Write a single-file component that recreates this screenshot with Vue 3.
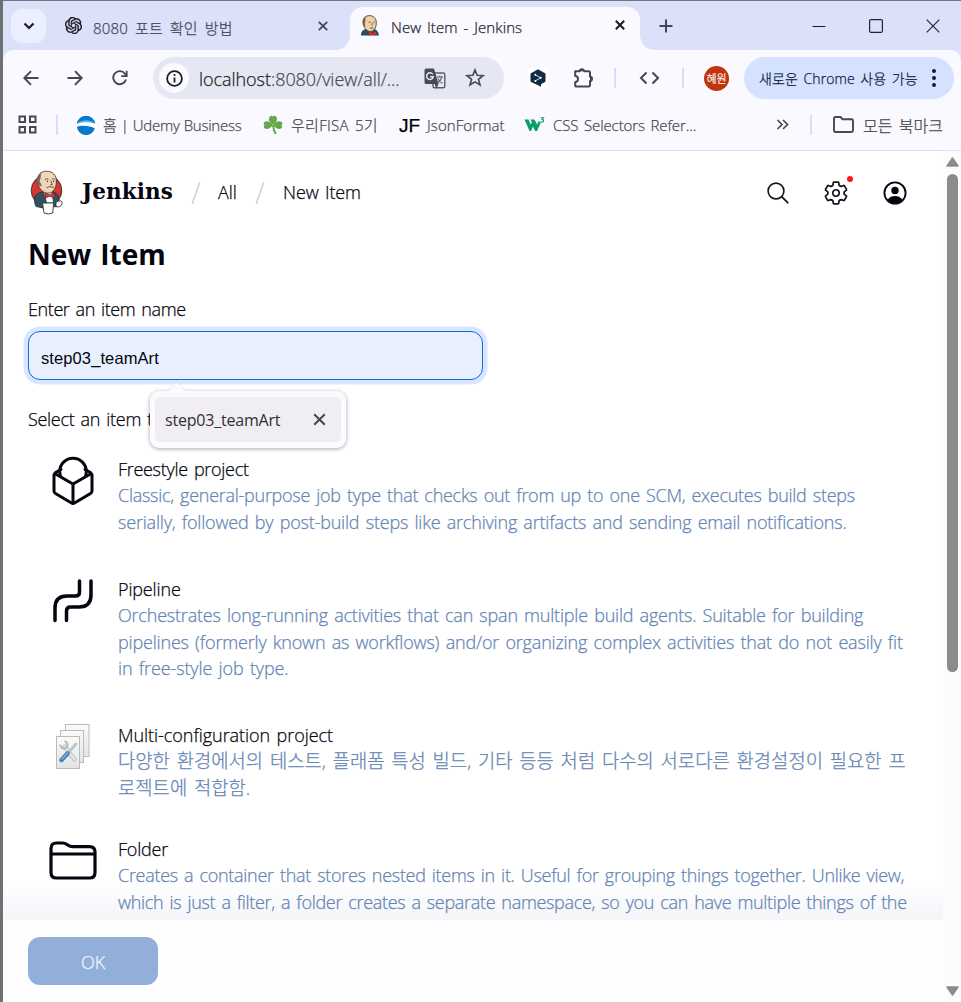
<script setup>
const items = [
  {
    id: 'freestyle',
    title: 'Freestyle project',
    lines: [
      'Classic, general-purpose job type that checks out from up to one SCM, executes build steps',
      'serially, followed by post-build steps like archiving artifacts and sending email notifications.',
    ],
  },
  {
    id: 'pipeline',
    title: 'Pipeline',
    lines: [
      'Orchestrates long-running activities that can span multiple build agents. Suitable for building',
      'pipelines (formerly known as workflows) and/or organizing complex activities that do not easily fit',
      'in free-style job type.',
    ],
  },
  {
    id: 'matrix',
    title: 'Multi-configuration project',
    lines: [
      '다양한 환경에서의 테스트, 플래폼 특성 빌드, 기타 등등 처럼 다수의 서로다른 환경설정이 필요한 프',
      '로젝트에 적합함.',
    ],
  },
  {
    id: 'folder',
    title: 'Folder',
    lines: [
      'Creates a container that stores nested items in it. Useful for grouping things together. Unlike view,',
      'which is just a filter, a folder creates a separate namespace, so you can have multiple things of the',
    ],
  },
]
</script>

<template>
  <div class="window">
    <div class="tabstrip">
      <button class="tabsearch">
        <svg width="12" height="8" viewBox="0 0 12 8"><path d="M1.5 1.5 6 6l4.5-4.500" fill="none" stroke="#1b1c20" stroke-width="2.200" /></svg>
      </button>
      <div class="tab idle">
        <svg width="17" height="17" viewBox="0 0 24 24"><path stroke="#111" stroke-width=".4" fill="#111" d="M22.2819 9.8211a5.9847 5.9847 0 0 0-.5157-4.9108 6.0462 6.0462 0 0 0-6.5098-2.9A6.0651 6.0651 0 0 0 4.9807 4.1818a5.9847 5.9847 0 0 0-3.9977 2.9 6.0462 6.0462 0 0 0 .7427 7.0966 5.98 5.98 0 0 0 .511 4.9107 6.051 6.051 0 0 0 6.5146 2.9001A5.9847 5.9847 0 0 0 13.2599 24a6.0557 6.0557 0 0 0 5.7718-4.2058 5.9894 5.9894 0 0 0 3.9977-2.9001 6.0557 6.0557 0 0 0-.7475-7.0729zm-9.022 12.6081a4.4755 4.4755 0 0 1-2.8764-1.0408l.1419-.0804 4.7783-2.7582a.7948.7948 0 0 0 .3927-.6813v-6.7369l2.02 1.1686a.071.071 0 0 1 .038.052v5.5826a4.504 4.504 0 0 1-4.4945 4.4944zm-9.6607-4.1254a4.4708 4.4708 0 0 1-.5346-3.0137l.142.0852 4.783 2.7582a.7712.7712 0 0 0 .7806 0l5.8428-3.3685v2.3324a.0804.0804 0 0 1-.0332.0615L9.74 19.9502a4.4992 4.4992 0 0 1-6.1408-1.6464zM2.3408 7.8956a4.485 4.485 0 0 1 2.3655-1.9728V11.6a.7664.7664 0 0 0 .3879.6765l5.8144 3.3543-2.0201 1.1685a.0757.0757 0 0 1-.071 0l-4.8303-2.7865A4.504 4.504 0 0 1 2.3408 7.872zm16.5963 3.8558L13.1038 8.364 15.1192 7.2a.0757.0757 0 0 1 .071 0l4.8303 2.7913a4.4944 4.4944 0 0 1-.6765 8.1042v-5.6772a.79.79 0 0 0-.407-.667zm2.0107-3.0231l-.142-.0852-4.7735-2.7818a.7759.7759 0 0 0-.7854 0L9.409 9.2297V6.8974a.0662.0662 0 0 1 .0284-.0615l4.8303-2.7866a4.4992 4.4992 0 0 1 6.6802 4.66zM8.3065 12.863l-2.02-1.1638a.0804.0804 0 0 1-.038-.0567V6.0742a4.4992 4.4992 0 0 1 7.3757-3.4537l-.142.0805L8.704 5.459a.7948.7948 0 0 0-.3927.6813zm1.0976-2.3654l2.602-1.4998 2.6069 1.4998v2.9994l-2.5974 1.4997-2.6067-1.4997Z" /></svg>
        <span class="tabtitle t-idle">8080 포트 확인 방법</span>
        <svg class="close" width="10" height="10" viewBox="0 0 10 10"><path d="M.8.8l8.400 8.400M9.200.8.8 9.200" stroke="#43475a" stroke-width="1.800" /></svg>
      </div>
      <div class="tab active">
        <svg width="20" height="21" viewBox="0 0 20 21">
          <path d="M1 20.500c0-4 2-6 5-6.500l8 0c3 .5 4.500 3 5 6.500z" fill="#2f4a5c" />
          <path d="M3 8C2.500 3 6 .6 9.500.6c4 0 7 2.700 6.800 7.600-.1 4.500-2.300 8.300-6 8.300C6.500 16.500 3.500 12 3 8z" fill="#efd0a7" stroke="#4b4038" stroke-width=".9" />
          <path d="M3 8c-.3-3 1-5.500 2.500-6.200C5 4.500 6 6.500 4.800 8.500l.7 3C4 11 3.200 9.500 3 8z" fill="#6d6259" />
          <path d="M8.500 7.500l2-.5m2.500 0 1.700.3M12 8v2.500M10 13h3.500" stroke="#4b4038" stroke-width=".8" fill="none" />
          <path d="M9 16.800l3.500 1.200 3.500-1.400v3.900l-3.500-1L9 20.500z" fill="#dc2a22" />
        </svg>
        <span class="tabtitle t-active">New Item - Jenkins</span>
        <svg class="close" width="10" height="10" viewBox="0 0 10 10"><path d="M.8.8l8.400 8.400M9.200.8.8 9.200" stroke="#1b1c22" stroke-width="2" /></svg>
      </div>
      <svg class="plus" width="14" height="14" viewBox="0 0 14 14"><path d="M7 .5v13M.5 7h13" stroke="#434755" stroke-width="2" /></svg>
      <div class="wincontrols">
        <svg width="14" height="14" viewBox="0 0 14 14"><path d="M.5 7.500h13" stroke="#1c1c22" /></svg>
        <svg width="14" height="14" viewBox="0 0 14 14"><rect x=".6" y=".6" width="12.800" height="12.800" rx="1.500" fill="none" stroke="#25262d" stroke-width="1.200" /></svg>
        <svg width="14" height="14" viewBox="0 0 14 14"><path d="M.7.7l12.600 12.600M13.300.7.7 13.300" stroke="#25262d" stroke-width="1.200" /></svg>
      </div>
    </div>

    <div class="toolbar">
      <svg class="back" width="16" height="16" viewBox="0 0 16 16"><path d="M15.500 8H1.500M8 1.200 1.300 8 8 14.800" fill="none" stroke="#434755" stroke-width="1.900" /></svg>
      <svg class="forward" width="16" height="16" viewBox="0 0 16 16"><path d="M.5 8h14M8 1.200 14.700 8 8 14.800" fill="none" stroke="#434755" stroke-width="1.900" /></svg>
      <svg class="reload" width="16" height="16" viewBox="0 0 16 16"><path d="M14 9.500A6.500 6.500 0 1 1 13 3.800L14.500 5.600" fill="none" stroke="#434755" stroke-width="1.900" /><path d="M14.700.8v5.400H9.300" fill="none" stroke="#434755" stroke-width="1.800" /></svg>
      <div class="omnibox">
        <span class="siteinfo">
          <svg width="17" height="17" viewBox="0 0 17 17"><circle cx="8.500" cy="8.500" r="7.400" fill="none" stroke="#1c1d22" stroke-width="1.800" /><path d="M8.500 7.500v5" stroke="#1c1d22" stroke-width="1.800" /><circle cx="8.500" cy="5" r="1.100" fill="#1c1d22" /></svg>
        </span>
        <span class="url"><b>localhost</b>:8080/view/all/...</span>
        <svg class="translate" width="22" height="21" viewBox="0 0 22 21">
          <rect x="9" y="5" width="11.800" height="14.800" rx="1.500" fill="none" stroke="#5a5d66" stroke-width="1.400" />
          <path d="M2 .5h8l4.500 15.500H2A1.500 1.500 0 0 1 .5 14.500V2A1.500 1.500 0 0 1 2 .5zM10.500 16h4L12.500 20.500z" fill="#494c53" />
          <path d="M8.700 6.300A3.300 3.300 0 1 0 9.200 8.800H6.200" fill="none" stroke="#e5e8f2" stroke-width="1.500" />
          <path d="M12.500 9h6.500M15.800 7.500V9m2 .2c-.6 2.500-2.300 4.500-4 5.600M13.800 10.500c1 2 2.600 3.600 4.600 4.800" fill="none" stroke="#5a5d66" stroke-width="1.100" />
        </svg>
        <svg class="star" width="20" height="20" viewBox="0 0 20 20"><path d="m10 2 2.100 5.300 5.900.4-4.500 3.700 1.500 5.600-5-3.100L5 17l1.500-5.600L2 7.700l5.900-.4z" fill="none" stroke="#494c53" stroke-width="1.700" /></svg>
      </div>
      <span class="deepl">
        <svg width="16" height="18" viewBox="0 0 16 18"><path d="M8 .3 15 4.200q.5.300.5.900v7q0 .6-.5.900l-4 2.300v2.400L8 16.300 1 13q-.5-.3-.5-.9v-7q0-.6.500-.9z" fill="#0f2b46" /><path d="m5.200 5.800 5.500 3-5.500 3.200" fill="none" stroke="#fff" stroke-width=".8" /><circle cx="5.300" cy="5.800" r="1" fill="#fff" /><circle cx="10.700" cy="8.800" r="1" fill="#fff" /><circle cx="5.300" cy="12" r="1" fill="#fff" /></svg>
      </span>
      <svg class="puzzle" width="22" height="22" viewBox="0 0 22 22"><path d="M2.200 4.300h4.600a2.200 2 0 0 1 4.400 0h4.600q1.200 0 1.200 1.200v4.200a2 2.200 0 0 1 0 4.400v4.200q0 1.300-1.200 1.300H3.400q-1.200 0-1.200-1.200v-3.500q2.800 0 2.800-3t-2.800-3z" fill="none" stroke="#434755" stroke-width="2" stroke-linejoin="round" /><path d="M7 4.300a2.200 2.200 0 0 1 4.200 0zM17 9.800a2 2.200 0 0 1 0 4.300z" fill="#434755" /></svg>
      <i class="sep s1"></i>
      <svg class="code" width="21" height="14" viewBox="0 0 21 14"><path d="M7.500 1.500 2 7l5.500 5.500M13.500 1.500 19 7l-5.500 5.500" fill="none" stroke="#434755" stroke-width="2" /></svg>
      <i class="sep s2"></i>
      <span class="avatar">혜원</span>
      <div class="update"><span class="updatetext">새로운 Chrome 사용 가능</span>
        <svg width="4" height="18" viewBox="0 0 4 18"><g fill="#0b1d45"><circle cx="2" cy="2" r="2" /><circle cx="2" cy="9" r="2" /><circle cx="2" cy="16" r="2" /></g></svg>
      </div>
    </div>

    <div class="bookmarks">
      <svg class="apps" width="19" height="19" viewBox="0 0 19 19"><g fill="none" stroke="#46494f" stroke-width="2"><rect x="1.500" y="1.500" width="5.500" height="5.500" /><rect x="12" y="1.500" width="5.500" height="5.500" /><rect x="1.500" y="12" width="5.500" height="5.500" /><rect x="12" y="12" width="5.500" height="5.500" /></g></svg>
      <i class="sep s3"></i>
      <svg class="udemy" width="20" height="20" viewBox="0 0 20 20"><rect width="20" height="20" fill="#fff" /><path d="M.7 8.800a9.400 9.400 0 0 1 18.600 0C15 5.800 5 5.800.7 8.800z" fill="#0878cf" /><path d="M.7 8.800C4 4 16 4 19.300 8.800 15 6.600 5 6.600.7 8.800z" fill="#48b8ef" /><path d="M.8 12c4-2 13-1.500 18.100 1.500A9.300 9.300 0 0 1 .8 12z" fill="#0878cf" /></svg>
      <span class="bm b-udemy">홈 | Udemy Business</span>
      <svg class="clover" width="20" height="20" viewBox="0 0 20 20"><g fill="#64a84b"><path d="M10 9.500C7 8 5 5 6.500 2 8 .2 9.300.6 10 1.600 10.700.6 12 .2 13.500 2 15 5 13 8 10 9.500z" /><path d="M10 10C8 13 4.500 14.800 2 13.600.3 12.300.8 11 1.600 10.200.5 9.500.2 8 1.600 6.800 4.500 5.400 8 7 10 10z" /><path d="M10 10c2 3 5.500 4.800 8 3.600 1.700-1.300 1.200-2.600.4-3.400 1.100-.7 1.400-2.200 0-3.400C15.500 5.400 12 7 10 10z" /></g><path d="M10 10q.2 5 2.800 9" fill="none" stroke="#64a84b" stroke-width="2" /></svg>
      <span class="bm b-fisa">우리FISA 5기</span>
      <span class="jf">JF</span>
      <span class="bm b-json">JsonFormat</span>
      <svg class="w3" width="21" height="15" viewBox="0 0 21 15"><path d="M.5 2.500h4l2.300 5 1-2.200L6.500 2.500h4l2.600 5L15 3.500l1.500 3L13 14h-2L9 9.500 7 14H5.500z" fill="#0a9f68" /><path d="M16.500.8h3l-1.400 1.700q1.700.2 1.500 1.600-.4 1.500-3.200.8" fill="none" stroke="#0a9f68" stroke-width="1.100" /></svg>
      <span class="bm b-css">CSS Selectors Refer...</span>
      <svg class="more" width="13" height="11" viewBox="0 0 13 11"><path d="m1.500 1 4.500 4.500L1.500 10M7 1l4.500 4.500L7 10" fill="none" stroke="#46494f" stroke-width="1.700" /></svg>
      <i class="sep s4"></i>
      <svg class="bmfolder" width="21" height="17" viewBox="0 0 21 17"><path d="M1 2.500Q1 1 2.500 1h5l2 2.200h9Q20 3.200 20 4.700v9.800q0 1.500-1.500 1.500h-16Q1 16 1 14.500z" fill="none" stroke="#46494f" stroke-width="1.900" /></svg>
      <span class="bm b-all">모든 북마크</span>
    </div>

    <div class="viewport">
      <main class="page">
        <header class="crumbs">
          <svg class="logo" width="33" height="45" viewBox="0 0 33 45">
            <ellipse cx="16.500" cy="20.500" rx="15.300" ry="15.500" fill="#d33833" stroke="#3a2622" stroke-width=".9" />
            <path d="M4.500 27c2-3.500 6-5 10-5.500l8 0c4 1 6.500 4 6.500 8.500l-2 6.500-14 1.500-7-1.500C4.500 33 4 30 4.500 27z" fill="#335061" stroke="#1e2e38" stroke-width=".8" />
            <path d="M14 22l7.500-.5 1.500 11h-6z" fill="#fff" />
            <path d="M7.500 12C6.500 5 11 1.200 16.500 1.200c6 0 10.300 3.800 9.900 11-.3 6-3.400 11-8.400 11C12 23.200 8.300 17 7.500 12z" fill="#f0d6b7" stroke="#49392f" stroke-width=".9" />
            <path d="M7.500 13c-1-5 .7-8.500 4-10.800-1.200 3.300 0 6-2 8.500l2.500 5.500C9.500 16 8 15 7.500 13z" fill="#6d6b6d" />
            <path d="M15 9.500q2-1.300 3.500-.3m3.500-.2q1.500-.8 3 .3M20.800 10.500l1.500 4-2 .3M16.500 17.800q2.500-2.200 7.500-.5" fill="none" stroke="#49392f" stroke-width=".8" />
            <circle cx="17.500" cy="11.300" r=".7" fill="#222" /><circle cx="23.700" cy="11.300" r=".7" fill="#222" />
            <path d="M15.200 23l4.300 1.700 4.800-1.900.2 4.800-5-1.200-4.500 1.800z" fill="#d33833" stroke="#7b1712" stroke-width=".6" />
            <path d="M26 32q6-2.500 6 .5c0 4-3 5-6 4z" fill="#fff" stroke="#333" stroke-width=".9" />
            <path d="M12.500 33h11.200l-1 10q-4.500 2-8.700 0z" fill="#fff" stroke="#333" stroke-width=".9" />
          </svg>
          <span class="brand">Jenkins</span>
          <svg class="slash sl1" width="10" height="22" viewBox="0 0 10 22"><path d="M8.500 1 1.500 21" stroke="#cbd7e8" stroke-width="1.800" stroke-linecap="round" /></svg>
          <span class="crumb c-all">All</span>
          <svg class="slash sl2" width="10" height="22" viewBox="0 0 10 22"><path d="M8.500 1 1.500 21" stroke="#cbd7e8" stroke-width="1.800" stroke-linecap="round" /></svg>
          <span class="crumb c-new">New Item</span>
          <div class="actions">
            <svg width="22" height="22" viewBox="0 0 22 22"><circle cx="9" cy="9" r="7.900" fill="none" stroke="#14141f" stroke-width="1.600" /><path d="m14.700 14.700 6 6" stroke="#14141f" stroke-width="1.800" stroke-linecap="round" /></svg>
            <span class="gear">
              <svg width="26" height="26" viewBox="0 0 512 512"><path fill="none" stroke="#14141f" stroke-width="34" stroke-linejoin="round" d="M262.290 192.310a64 64 0 1 0 57.400 57.400 64.130 64.130 0 0 0-57.400-57.400zM416.390 256a154.340 154.340 0 0 1-1.530 20.790l45.210 35.460a10.810 10.810 0 0 1 2.450 13.750l-42.770 74a10.810 10.810 0 0 1-13.140 4.590l-44.900-18.080a16.110 16.110 0 0 0-15.170 1.750A164.480 164.480 0 0 1 325 400.800a15.940 15.940 0 0 0-8.820 12.140l-6.730 47.890a11.080 11.080 0 0 1-10.680 9.170h-85.540a11.110 11.110 0 0 1-10.690-8.870l-6.720-47.820a16.070 16.070 0 0 0-9-12.220 155.300 155.300 0 0 1-21.460-12.570 16 16 0 0 0-15.110-1.710l-44.890 18.070a10.810 10.810 0 0 1-13.140-4.580l-42.770-74a10.800 10.800 0 0 1 2.450-13.750l38.210-30a16.050 16.050 0 0 0 6-14.080c-.36-4.170-.58-8.330-.58-12.500s.21-8.270.58-12.350a16 16 0 0 0-6.070-13.940l-38.190-30A10.810 10.810 0 0 1 49.480 186l42.770-74a10.810 10.810 0 0 1 13.140-4.590l44.900 18.080a16.110 16.110 0 0 0 15.170-1.750A164.480 164.480 0 0 1 187 111.200a15.940 15.940 0 0 0 8.820-12.140l6.730-47.890A11.080 11.080 0 0 1 213.230 42h85.540a11.110 11.110 0 0 1 10.690 8.870l6.720 47.820a16.070 16.070 0 0 0 9 12.220 155.300 155.300 0 0 1 21.460 12.570 16 16 0 0 0 15.110 1.710l44.890-18.070a10.810 10.810 0 0 1 13.140 4.580l42.770 74a10.800 10.800 0 0 1-2.450 13.750l-38.210 30a16.050 16.050 0 0 0-6.050 14.080c.33 4.140.55 8.300.55 12.470z" /></svg>
              <i class="dot"></i>
            </span>
            <svg width="24" height="24" viewBox="0 0 24 24"><circle cx="12" cy="12" r="10.600" fill="#fff" stroke="#05050f" stroke-width="1.800" /><circle cx="12" cy="9.500" r="3.700" fill="#05050f" /><path d="M4.800 18.500C6.500 16 9 15 12 15s5.500 1 7.200 3.500C17.500 21 15 22.300 12 22.300S6.500 21 4.800 18.500z" fill="#05050f" /></svg>
          </div>
        </header>

        <h1 class="heading"><span>New Item</span></h1>
        <label class="label l-name"><span>Enter an item name</span></label>
        <div class="namefield"><span>step03_teamArt</span>
          <div class="suggest">
            <div class="option"><span class="optiontext">step03_teamArt</span>
              <svg width="13" height="13" viewBox="0 0 13 13"><path d="m1.200 1.200 10.600 10.600M11.800 1.200 1.200 11.800" stroke="#46464c" stroke-width="2" /></svg>
            </div>
          </div>
        </div>
        <div class="label l-type"><span>Select an item type</span></div>

        <ul class="items">
          <li v-for="item in items" :key="item.id" class="item" :class="item.id">
            <div class="icon">
              <svg v-if="item.id === 'freestyle'" width="42" height="50" viewBox="0 0 42 50" fill="none" stroke="#05050f" stroke-width="3" stroke-linejoin="round" stroke-linecap="round">
                <path d="M9 13.500 3.500 16.500M33 13.500l5.500 3" />
                <circle cx="21" cy="15.500" r="13.300" />
                <path d="M2.700 17.500 21 28l18.300-10.500q.7.700.7 1.500v16q0 1.600-1.500 2.500L22.500 47q-1.500.8-3 0l-16-9.500Q2 36.600 2 35V19q0-.8.7-1.500z" fill="#fff" />
                <path d="M21 28v19" />
              </svg>
              <svg v-else-if="item.id === 'pipeline'" width="42" height="44" viewBox="0 0 42 44" fill="none" stroke="#05050f" stroke-width="3.500" stroke-linecap="round">
                <path d="M27.500 2v11q0 4-4 4H15Q3 17 3 29v12.500" /><path d="M39 2v14q0 12-12 12h-8.500q-4 0-4 4v9.500" />
              </svg>
              <svg v-else-if="item.id === 'matrix'" width="34" height="46" viewBox="0 0 34 46">
                <defs><linearGradient id="paper" x1="0" y1="0" x2="0" y2="1"><stop offset="0" stop-color="#fbfbf9" /><stop offset="1" stop-color="#e3e4e2" /></linearGradient></defs>
                <g fill="url(#paper)" stroke="#babdb6"><rect x="9.500" y=".5" width="23.500" height="32" /><rect x="4.500" y="6.500" width="23" height="32" /><rect x=".5" y="12.500" width="23" height="32" /></g>
                <path d="M8.500 22.500 18.500 35.500" stroke="#b3b7b6" stroke-width="4" stroke-linecap="round" /><path d="M8.500 22.500 18.500 35.500" stroke="#e9ebea" stroke-width="2.300" stroke-linecap="round" />
                <path d="M4.500 20.500a3.500 3.500 0 1 0 4-3" fill="none" stroke="#b3b7b6" stroke-width="2" />
                <path d="M20 20 12 29" stroke="#b5c5d8" stroke-width="3" stroke-linecap="round" /><path d="M11.500 29.500 5.500 36" stroke="#4c7db9" stroke-width="4.500" stroke-linecap="round" /><path d="M11.500 29 6 35" stroke="#8eb2dd" stroke-width="1.200" stroke-linecap="round" />
              </svg>
              <svg v-else width="48" height="39" viewBox="0 0 48 39" fill="none" stroke="#05050f" stroke-width="3.200">
                <path d="M2 7.500Q2 2 7.500 2h6q2.500 0 4.500 1.500l1.500 1Q21 5.600 23.500 5.600h17Q46 5.600 46 11v20.500q0 5.500-5.500 5.500h-33Q2 37 2 31.500zM2 13h44" />
              </svg>
            </div>
            <div class="copy">
              <div class="line title" :class="item.id + '-t'"><span>{{ item.title }}</span></div>
              <div v-for="(line, i) in item.lines" :key="i" class="line desc" :class="item.id + '-' + i"><span>{{ line }}</span></div>
            </div>
          </li>
        </ul>

        <div class="bottombar"><button class="ok">OK</button></div>
      </main>

      <aside class="scrollbar">
        <svg width="13" height="10" viewBox="0 0 13 10"><path d="M6.500 1 12 9H1z" fill="#8b8b8b" stroke="#8b8b8b" stroke-width="1.500" stroke-linejoin="round" /></svg>
        <i class="thumb"></i>
        <svg class="down" width="13" height="10" viewBox="0 0 13 10"><path d="M6.500 9 12 1H1z" fill="#8b8b8b" stroke="#8b8b8b" stroke-width="1.500" stroke-linejoin="round" /></svg>
      </aside>
    </div>
  </div>
</template>

<style>
body { margin: 0; background: #fff; }
</style>

<style scoped>
.window { box-sizing: border-box; width: 961px; height: 1002px; overflow: hidden; display: flex; flex-direction: column; border-top: 1px solid #77757a; border-left: 3px solid #6f7072; background: #dae1f9; font-family: "Open Sans", "Noto Sans", "Noto Sans CJK KR", sans-serif; font-weight: 300; -webkit-text-stroke: .25px currentColor; word-spacing: 1.800px; white-space: nowrap; color: #05050f; }
svg { display: block; flex: none; }
span { flex: none; }
button { border: 0; padding: 0; font: inherit; }
.tabstrip { height: 49px; display: flex; align-items: center; flex: none; }
.tabsearch { flex: none; width: 35px; height: 34px; margin-left: 8px; border-radius: 11px; background: #ecf0fe; display: flex; align-items: center; justify-content: center; }
.tab { display: flex; align-items: center; flex: none; box-sizing: border-box; font-size: 15px; }
.tab.idle { width: 304px; padding-left: 19px; color: #44485a; }
.tabtitle { margin-left: 11px; }
.t-idle { margin-top: 3px; letter-spacing: .2px; word-spacing: 2.800px; }
.t-active { margin-top: 3px; color: #24252c; letter-spacing: .1px; }
.close { margin-left: auto; }
.idle .close { margin-right: 22px; }
.active .close { margin-right: 15px; }
.tab.active { position: relative; width: 290px; height: 43px; align-self: flex-end; border-radius: 13px 13px 0 0; background: #f9f9ff; padding: 0 0 7px 10px; }
.tab.active::before, .tab.active::after { content: ""; position: absolute; bottom: 0; width: 14px; height: 14px; }
.tab.active::before { left: -14px; background: radial-gradient(circle at 0 0, transparent 13.500px, #f9f9ff 14px); }
.tab.active::after { right: -14px; background: radial-gradient(circle at 100% 0, transparent 13.500px, #f9f9ff 14px); }
.plus { margin-left: 19px; }
.wincontrols { display: flex; gap: 43px; margin-left: auto; margin-right: 21px; }
.toolbar { height: 56px; flex: none; display: flex; align-items: center; background: #f9f9ff; border-radius: 10px 10px 0 0; }
.back { margin-left: 20px; }
.forward { margin-left: 28px; }
.reload { margin-left: 29px; }
.omnibox { display: flex; flex: none; align-items: center; width: 351px; height: 42px; margin-left: 25px; border-radius: 21px; background: #e5e8f2; }
.siteinfo { width: 30px; height: 30px; margin-left: 6px; border-radius: 50%; background: #fafaff; display: flex; align-items: center; justify-content: center; }
.url { margin: 2px 0 0 10px; font-size: 18px; letter-spacing: -.05px; color: #4a4d57; width: 215px; }
.url b { font-weight: inherit; color: #1d1e24; }
.translate { margin-left: 10px; }
.star { margin-left: 19px; }
.deepl { width: 20px; height: 20px; margin-left: 24px; background: #fff; display: flex; align-items: center; justify-content: center; }
.puzzle { margin-left: 25px; }
.sep { flex: none; width: 2px; height: 20px; background: #d3e0fb; }
.s1 { margin-left: 19px; }
.code { margin-left: 23px; }
.s2 { margin-left: 22px; }
.avatar { width: 25px; height: 25px; margin-left: 20px; border-radius: 50%; background: #bf360c; color: #fff; font-size: 11px; line-height: 25px; text-align: center; }
.update { display: flex; flex: none; align-items: center; box-sizing: border-box; width: 210px; height: 42px; margin-left: 15px; padding-left: 15px; border-radius: 21px; background: #d5e2ff; color: #0b1d45; font-size: 14px; letter-spacing: .1px; }
.update svg { margin-left: auto; margin-right: 18px; }
.bookmarks { box-sizing: border-box; height: 45px; padding-bottom: 7px; flex: none; display: flex; align-items: center; background: #f9f9ff; border-bottom: 1px solid #dfe1ec; font-size: 15px; color: #46494f; }
.apps { margin-left: 15px; }
.s3 { margin-left: 19px; }
.udemy { margin-left: 18px; }
.bm { margin-left: 8px; box-sizing: border-box; }
.b-udemy { width: 152px; margin-left: 7px; letter-spacing: -.25px; word-spacing: .500px; }
.clover { margin-left: 8px; }
.b-fisa { width: 97px; letter-spacing: .3px; }
.jf { width: 20px; margin-left: 11px; font: 19px "Liberation Sans", sans-serif; color: #000; padding-top: 3px; }
.b-json { width: 88px; letter-spacing: .1px; }
.w3 { margin-left: 9px; }
.b-css { width: 223px; letter-spacing: -.1px; }
.more { margin-left: 0; }
.s4 { margin-left: 21px; }
.bmfolder { margin-left: 21px; }
.b-all { margin-left: 9px; font-size: 16px; letter-spacing: .1px; }
.viewport { flex: 1; display: flex; min-height: 0; background: #fff; }
.page { position: relative; width: 940px; overflow: hidden; box-sizing: border-box; padding: 0 25px; }
.crumbs { display: flex; align-items: center; height: 83px; font-size: 18px; }
.logo { margin-left: 2px; }
.brand { width: 92px; margin: -3px 0 0 19px; font: bold 21.500px "DejaVu Serif", serif; letter-spacing: .1px; -webkit-text-stroke: 0; }
.sl1 { margin-left: 17px; }
.sl2 { margin-left: 17px; }
.crumb { margin-top: -1px; letter-spacing: -.1px; }
.c-all { width: 20px; margin-left: 17px; }
.c-new { margin-left: 18px; }
.actions { display: flex; align-items: center; margin-left: auto; margin-right: 11px; gap: 34px; }
.gear { position: relative; }
.dot { position: absolute; right: -4px; top: -4px; width: 6px; height: 6px; border-radius: 50%; background: #ff1320; }
.heading { margin: 0; height: 40px; line-height: 40px; font-size: 28px; font-weight: 700; -webkit-text-stroke: 0; }
.label { display: block; font-size: 18px; line-height: 26px; }
.l-name { margin-top: 22px; letter-spacing: -.4px; }
.namefield { position: relative; box-sizing: border-box; width: 455px; height: 49px; margin-top: 9px; padding-left: 12px; border: 1px solid #0b6af0; border-radius: 12px; background: #e8effd; box-shadow: 0 0 0 4.500px #d9e7fd; font: 16.500px/52px "Liberation Sans", sans-serif; letter-spacing: .1px; color: #05050f; -webkit-text-stroke: 0; }
.suggest { position: absolute; z-index: 2; left: 121px; top: 59px; box-sizing: border-box; width: 196px; height: 57px; padding: 6px 5px; border-radius: 9px; background: #fbfaff; box-shadow: 0 1px 4px rgba(0, 0, 0, .35); }
.suggest::before { content: ""; position: absolute; left: 20px; top: -6px; width: 13px; height: 13px; transform: rotate(45deg); background: #fbfaff; box-shadow: -1px -1px 1px rgba(0, 0, 0, .06); }
.option { position: relative; display: flex; align-items: center; height: 45px; padding: 0 15px 0 10px; border-radius: 5px; background: #f0edf3; font: 16px "Open Sans", sans-serif; letter-spacing: -.2px; color: #303036; }
.option svg { margin-left: auto; }
.l-type { margin-top: 26px; letter-spacing: -.3px; }
.items { list-style: none; margin: 24px 0 0; padding: 0; }
.item { display: flex; height: 120px; }
.item.pipeline { height: 146px; }
.item.matrix { height: 114px; }
.icon { width: 90px; flex: none; display: flex; justify-content: center; align-items: flex-start; box-sizing: border-box; }
.pipeline .icon { padding-top: 3px; }
.matrix .icon { padding-top: 2px; }
.folder .icon { padding-top: 5px; }
.line { height: 26.500px; line-height: 26.500px; font-size: 18px; }
.title { height: 26px; }
.desc { color: #6485b4; }
.freestyle-t { letter-spacing: -.3px; }
.freestyle-0 { letter-spacing: -.27px; }
.freestyle-1 { letter-spacing: -.19px; }
.pipeline-t { letter-spacing: -.15px; }
.pipeline-0 { letter-spacing: -.2px; }
.pipeline-1 { letter-spacing: -.18px; }
.pipeline-2 { letter-spacing: -.12px; }
.matrix-t { letter-spacing: -.05px; }
.matrix-0, .matrix-1 { font-size: 18.800px; letter-spacing: .03px; }
.folder-t { letter-spacing: -.2px; }
.folder-0 { letter-spacing: -.29px; }
.folder-1 { letter-spacing: -.32px; }
.bottombar { position: absolute; left: 0; right: 0; bottom: 0; height: 82px; background: #fefefe; }
.bottombar::before { content: ""; position: absolute; left: 0; right: 0; top: -40px; height: 40px; background: linear-gradient(rgba(100, 115, 165, 0), rgba(100, 115, 165, .07)); }
.ok { display: block; width: 130px; height: 48px; margin: 17px 0 0 25px; border-radius: 12px; background: #92afda; color: #f1f5fb; font-size: 18px; padding-top: 2px; }
.scrollbar { width: 18px; background: #fcfcfc; display: flex; flex-direction: column; align-items: center; box-sizing: border-box; padding: 6px 0; }
.thumb { width: 11px; height: 498px; margin-top: 7px; border-radius: 6px; background: #8b8b8b; }
.down { margin-top: auto; }
</style>
